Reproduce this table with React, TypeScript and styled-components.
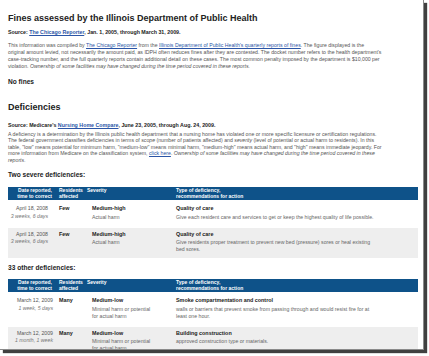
import styled, { createGlobalStyle } from 'styled-components';

type Deficiency = {
  date: string,
  time: string,
  residents: string,
  severity: string,
  harm: string[],
  type: string,
  action: string[],
}

const severe: Deficiency[] = [
  {
    date: 'April 18, 2008',
    time: '3 weeks, 6 days',
    residents: 'Few',
    severity: 'Medium-high',
    harm: ['Actual harm'],
    type: 'Quality of care',
    action: ['Give each resident care and services to get or keep the highest quality of life possible.'],
  },
  {
    date: 'April 18, 2008',
    time: '3 weeks, 6 days',
    residents: 'Few',
    severity: 'Medium-high',
    harm: ['Actual harm'],
    type: 'Quality of care',
    action: [
      'Give residents proper treatment to prevent new bed (pressure) sores or heal existing',
      'bed sores.',
    ],
  },
];

const other: Deficiency[] = [
  {
    date: 'March 12, 2009',
    time: '1 week, 5 days',
    residents: 'Many',
    severity: 'Medium-low',
    harm: ['Minimal harm or potential', 'for actual harm'],
    type: 'Smoke compartmentation and control',
    action: [
      'walls or barriers that prevent smoke from passing through and would resist fire for at',
      'least one hour.',
    ],
  },
  {
    date: 'March 12, 2009',
    time: '1 month, 1 week',
    residents: 'Many',
    severity: 'Medium-low',
    harm: ['Minimal harm or potential', 'for actual harm'],
    type: 'Building construction',
    action: ['approved construction type or materials.'],
  },
];

const GlobalStyle = createGlobalStyle`
  html, body {
    margin: 0;
    padding: 0;
    background: #fff;
  }

  body {
    font-family: "Liberation Sans", Arial, sans-serif;
  }
`;

const Canvas = styled.div`
  width: 429px;
  height: 356px;
  overflow: hidden;
  background: #fff;
`;

const Sheet = styled.div`
  box-sizing: border-box;
  width: 424px;
  height: 350px;
  padding: 13px 5px 0 8px;
  border-right: 1px solid #8a8a8a;
  border-bottom: 1px solid #8a8a8a;
  box-shadow: 3px 3px 1px rgba(0, 0, 0, .75);
  overflow: hidden;
  color: #444;
`;

const Heading = styled.h1<{ $top?: number }>`
  margin: ${({ $top }) => $top ?? 0}px 0 0;
  font-size: 9px;
  line-height: 11px;
  font-weight: bold;
  color: #222;
  white-space: nowrap;
`;

const Source = styled.div<{ $top: number }>`
  margin-top: ${({ $top }) => $top}px;
  font-size: 5.3px;
  line-height: 7px;
  font-weight: bold;
  color: #222;
  white-space: nowrap;
`;

const Paragraph = styled.p<{ $top: number, $lh: number }>`
  margin: ${({ $top }) => $top}px 0 0;
  font-size: 5.2px;
  line-height: ${({ $lh }) => $lh}px;
  color: #555;
  white-space: nowrap;
`;

const Link = styled.a`
  color: #2b55a6;
  text-decoration: underline;
`;

const SubHeading = styled.h2<{ $top: number }>`
  margin: ${({ $top }) => $top}px 0 0;
  font-size: 6.6px;
  line-height: 8px;
  font-weight: bold;
  color: #222;
`;

const Table = styled.div<{ $top: number }>`
  display: flex;
  flex-direction: column;
  gap: 2px;
  margin-top: ${({ $top }) => $top}px;
`;

const Grid = styled.div`
  display: grid;
  grid-template-columns: 49px 28px 89px 1fr;
`;

const HeaderRow = styled(Grid)`
  height: 13px;
  box-sizing: border-box;
  padding: 1px 0;
  background: #0e5289;
  color: #fff;
  font-size: 5px;
  line-height: 5.5px;
  font-weight: bold;
`;

const HeaderCell = styled.div<{ $right?: boolean }>`
  padding: ${({ $right }) => $right ? '0 5px 0 0' : '0 0 0 2px'};
  text-align: ${({ $right }) => $right ? 'right' : 'left'};
  white-space: nowrap;
`;

const Row = styled(Grid)<{ $shaded?: boolean }>`
  padding: 3px 0 5px;
  background: ${({ $shaded }) => $shaded ? '#eeeeee' : '#fff'};
  font-size: 5.2px;
  white-space: nowrap;
`;

const DateCell = styled.div<{ $pad: number }>`
  padding-right: ${({ $pad }) => $pad}px;
  text-align: right;
  line-height: 7.5px;
  color: #555;
`;

const Elapsed = styled.div`
  font-style: italic;
  color: #777;
`;

const Cell = styled.div<{ $indent?: number }>`
  padding-left: ${({ $indent }) => 2 + ($indent ?? 0)}px;
`;

const Label = styled.div`
  font-size: 5.4px;
  line-height: 7px;
  font-weight: bold;
  color: #222;
`;

const Detail = styled.div`
  margin-top: 1.5px;
  line-height: 7px;
  color: #666;
`;

const DeficiencyTable = ({ rows, top, datePad }: { rows: Deficiency[], top: number, datePad: number }) => (
  <Table $top={top}>
    <HeaderRow>
      <HeaderCell $right>Date reported,<br/>time to correct</HeaderCell>
      <HeaderCell>Residents<br/>affected</HeaderCell>
      <HeaderCell>Severity</HeaderCell>
      <HeaderCell>Type of deficiency,<br/>recommendations for action</HeaderCell>
    </HeaderRow>
    { rows.map((row, i) => (
      <Row key={i} $shaded={i % 2 === 1}>
        <DateCell $pad={datePad}>
          {row.date}
          <Elapsed>{row.time}</Elapsed>
        </DateCell>
        <Cell>
          <Label>{row.residents}</Label>
        </Cell>
        <Cell $indent={5}>
          <Label>{row.severity}</Label>
          <Detail>{row.harm.map((line, j) => <div key={j}>{line}</div>)}</Detail>
        </Cell>
        <Cell>
          <Label>{row.type}</Label>
          <Detail>{row.action.map((line, j) => <div key={j}>{line}</div>)}</Detail>
        </Cell>
      </Row>
    ))}
  </Table>
);

const App = () => (
  <Canvas>
    <GlobalStyle/>
    <Sheet>
      <Heading>Fines assessed by the Illinois Department of Public Health</Heading>
      <Source $top={5}>
        Source: <Link>The Chicago Reporter</Link>, Jan. 1, 2005, through March 31, 2009.
      </Source>
      <Paragraph $top={6} $lh={7}>
        This information was compiled by <Link>The Chicago Reporter</Link> from the{' '}
        <Link>Illinois Department of Public Health's quarterly reports of fines</Link>. The figure displayed is the<br/>
        original amount levied, not necessarily the amount paid, as IDPH often reduces fines after they are contested. The docket number refers to the health department's<br/>
        case-tracking number, and the full quarterly reports contain additional detail on these cases. The most common penalty imposed by the department is $10,000 per<br/>
        violation. <i>Ownership of some facilities may have changed during the time period covered in these reports.</i>
      </Paragraph>
      <SubHeading $top={8}>No fines</SubHeading>

      <Heading $top={16}>Deficiencies</Heading>
      <Source $top={9}>
        Source: Medicare's <Link>Nursing Home Compare</Link>, June 23, 2005, through Aug. 24, 2009.
      </Source>
      <Paragraph $top={2} $lh={6.4}>
        A deficiency is a determination by the Illinois public health department that a nursing home has violated one or more specific licensure or certification regulations.<br/>
        The federal government classifies deficiencies in terms of <i>scope</i> (number of patients affected) and <i>severity</i> (level of potential or actual harm to residents). In this<br/>
        table, "low" means potential for minimum harm, "medium-low" means minimal harm, "medium-high" means actual harm, and "high" means immediate jeopardy. For<br/>
        more information from Medicare on the classification system, <Link>click here</Link>. <i>Ownership of some facilities may have changed during the time period covered in these</i><br/>
        <i>reports.</i>
      </Paragraph>

      <SubHeading $top={8}>Two severe deficiencies:</SubHeading>
      <DeficiencyTable rows={severe} top={8} datePad={9}/>

      <SubHeading $top={6}>33 other deficiencies:</SubHeading>
      <DeficiencyTable rows={other} top={7} datePad={4}/>
    </Sheet>
  </Canvas>
);

export default App;
